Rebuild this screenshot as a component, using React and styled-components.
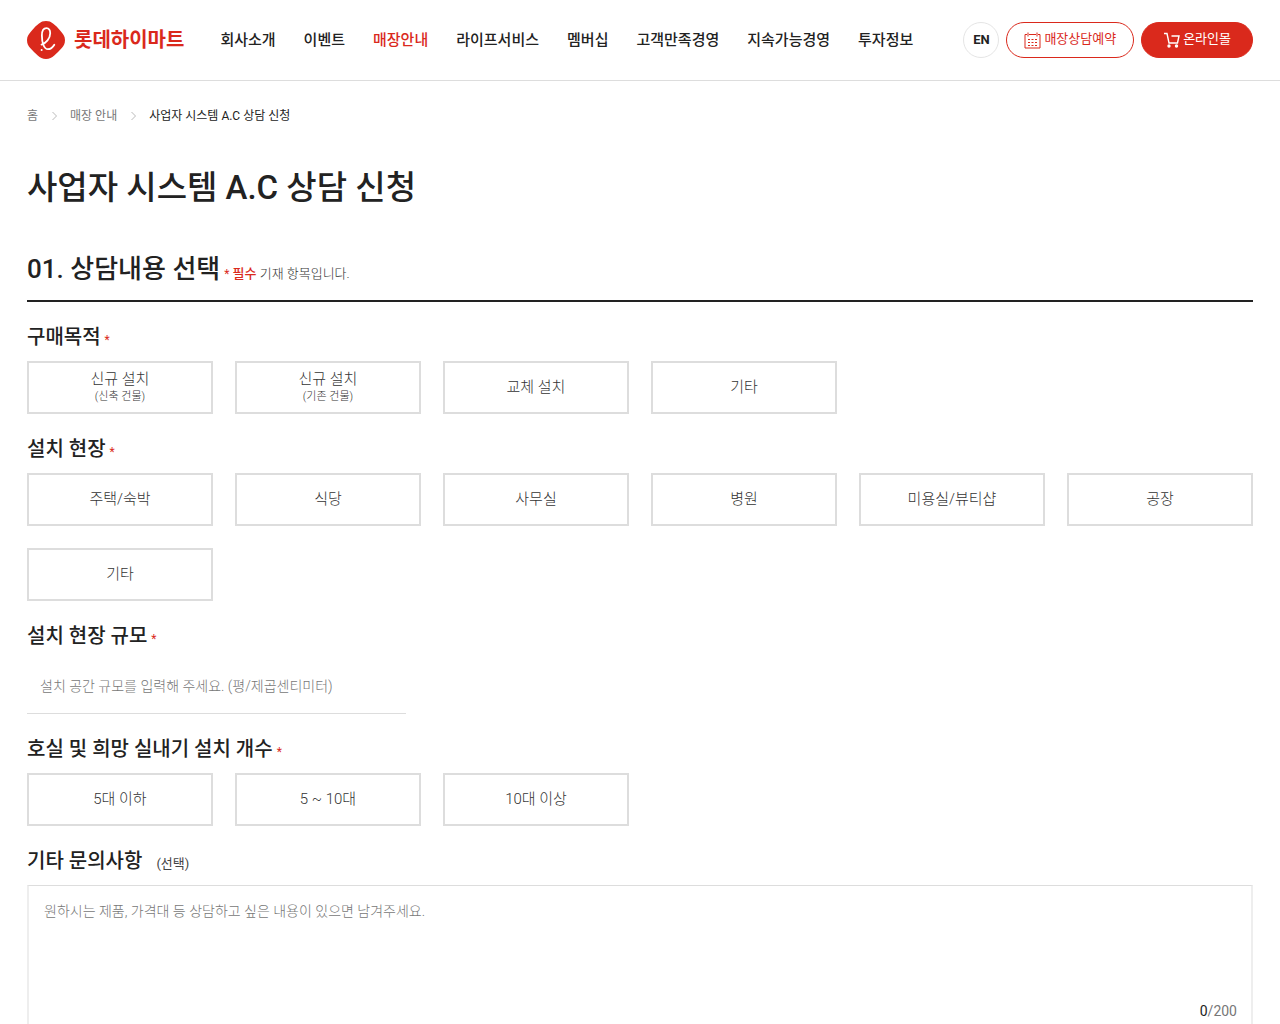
import React, { useState } from "react";
import styled, { createGlobalStyle } from "styled-components";

const GlobalStyle = createGlobalStyle`
  *, *::before, *::after { box-sizing: border-box; }
  body {
    margin: 0;
    background: #fff;
    color: #222;
    font-family: Roboto, "Noto Sans CJK KR", sans-serif;
    font-size: 14px;
  }
  h1, h2, h3, p, ul, ol { margin: 0; padding: 0; }
  ul, ol { list-style: none; }
  a { color: inherit; text-decoration: none; }
  button, input, textarea { font: inherit; color: inherit; }
`;

const Header = styled.header`
  display: flex;
  align-items: center;
  height: 81px;
  padding: 0 27px;
  border-bottom: 1px solid #ddd;
`;

const Logo = styled.a`
  display: flex;
  align-items: center;
  gap: 9px;
  color: #da291c;
  font-size: 20px;
  font-weight: 700;
  line-height: 30px;
  white-space: nowrap;
`;

const Nav = styled.nav`
  flex: 1;
  margin-left: 36px;
`;

const NavList = styled.ul`
  display: flex;
  gap: 28px;
`;

const NavLink = styled.a`
  color: ${(p) => (p.$active ? "#da291c" : "#222")};
  font-size: 15px;
  font-weight: 500;
  line-height: 24px;
  white-space: nowrap;
`;

const Tools = styled.div`
  display: flex;
  gap: 7px;
`;

const Language = styled.button`
  width: 36px;
  height: 36px;
  padding: 0 0 2px;
  border: 1px solid #e5e5e5;
  border-radius: 50%;
  background: #fff;
  font-size: 13px;
  font-weight: 700;
`;

const Pill = styled.a`
  display: flex;
  align-items: center;
  justify-content: center;
  gap: 3px;
  height: 36px;
  padding: 0 ${(p) => (p.$filled ? 21 : 17)}px;
  border: 1px solid #da291c;
  border-radius: 18px;
  background: ${(p) => (p.$filled ? "#da291c" : "#fff")};
  color: ${(p) => (p.$filled ? "#fff" : "#da291c")};
  font-size: 13px;
  line-height: 20px;
  white-space: nowrap;
`;

const PillText = styled.span`
  padding-bottom: 3px;
`;

const Main = styled.main`
  padding: 25px 27px 40px;
`;

const Crumbs = styled.ol`
  display: flex;
  align-items: center;
  gap: 12px;
  font-size: 12px;
  line-height: 20px;
`;

const Crumb = styled.li`
  display: flex;
  align-items: center;
  gap: 13px;
  color: ${(p) => (p.$current ? "#222" : "#777")};
`;

const Title = styled.h1`
  margin-top: 37px;
  font-size: 33px;
  font-weight: 500;
  line-height: 50px;
`;

const SectionHead = styled.div`
  display: flex;
  align-items: baseline;
  gap: 4px;
  margin-top: 36px;
  padding-bottom: 11px;
  border-bottom: 2px solid #222;
`;

const SectionTitle = styled.h2`
  font-size: 26px;
  font-weight: 500;
  line-height: 40px;
`;

const Note = styled.p`
  color: #333;
  font-size: 13px;
  font-weight: 300;
  line-height: 20px;

  strong { color: #da291c; font-weight: 500; }
`;

const Star = styled.span`
  color: #da291c;
  font-size: 12px;
  font-weight: 400;
  line-height: 1;
`;

const Field = styled.section`
  margin-top: 20px;
`;

const FieldTitle = styled.h3`
  display: flex;
  align-items: baseline;
  gap: ${(p) => (p.$wide ? 14 : 4)}px;
  height: 30px;
  margin-bottom: 9px;
  font-size: 20px;
  font-weight: 500;
  line-height: 30px;
`;

const Optional = styled.span`
  color: #444;
  font-size: 13px;
  font-weight: 400;
  line-height: 20px;
`;

const Options = styled.div`
  display: grid;
  grid-template-columns: repeat(6, 1fr);
  gap: 22px;
`;

const Option = styled.button`
  display: flex;
  flex-direction: column;
  align-items: center;
  justify-content: center;
  height: 53px;
  padding: 0 0 1px;
  border: 2px solid ${(p) => (p.$selected ? "#da291c" : "#ddd")};
  background: #fff;
  color: ${(p) => (p.$selected ? "#da291c" : "#333")};
  font-size: 15px;
  font-weight: 300;
  line-height: 20px;
  cursor: pointer;
`;

const OptionNote = styled.small`
  font-size: 11px;
  line-height: 16px;
`;

const SizeInput = styled.input`
  display: block;
  width: 379px;
  max-width: 100%;
  height: 54px;
  padding: 0 13px 2px;
  border: 0;
  border-bottom: 1px solid #ddd;
  background: #fff;
  font-size: 14px;
  font-weight: 300;
  &::placeholder { color: #777; opacity: 1; }
`;

const MessageBox = styled.div`
  padding: 13px 14px 16px 15px;
  border: 1px solid #ddd;
  border-right: 2px solid #eee;
  border-left: 2px solid #eee;
`;

const Message = styled.textarea`
  display: block;
  width: 100%;
  height: 92px;
  padding: 0;
  border: 0;
  outline: 0;
  resize: none;
  background: transparent;
  font-size: 14px;
  font-weight: 300;
  line-height: 24px;
  &::placeholder { color: #777; opacity: 1; }
`;

const Counter = styled.p`
  margin-top: 10px;
  color: #777;
  font-size: 14px;
  line-height: 20px;
  text-align: right;

  b { color: #222; font-weight: 400; }
`;

function LogoMark() {
  return (
    <svg width="38" height="38" viewBox="0 0 38 38" aria-hidden="true">
      <path
        d="M19 0c3 0 5 .8 7 2.500l3.600 3 3.300 3.800C36 12.700 38 15 38 19s-1.500 6-3.200 8l-3.800 4-4 3.800C25 36.600 22.500 38 19 38s-6-1.400-8-3.200L7 31l-3.800-4C1.500 25 0 23 0 19s2-6.300 5.100-9.700l3.300-3.800 3.600-3C14 .8 16 0 19 0z"
        fill="#da291c"
      />
      <path
        d="M14.500 23.600c4.500-1.300 8.700-6.100 8.700-11.300 0-3.100-1.300-5.100-3.700-5.100-2.900 0-4.600 3-4.600 7.300 0 7 2 13.700 6 13.700 3 0 4.800-1.800 6.400-4.500"
        fill="none"
        stroke="#fff"
        strokeWidth="1.800"
        strokeLinecap="round"
      />
      <circle cx="14.600" cy="29" r="1" fill="#fff" />
    </svg>
  );
}

function CalendarIcon() {
  return (
    <svg width="17" height="17" viewBox="0 0 17 17" fill="none" stroke="currentColor" aria-hidden="true">
      <path d="M1 2.500h2M5 2.500h7M14 2.500h2v13.500H1V2.500M4 .5v4M13 .5v4" />
      <path d="M4 7.500h2m1.500 0h2m1.500 0h2M4 10.500h2m1.500 0h2m1.500 0h2M4 13.500h2m1.500 0h2m1.500 0h2" />
    </svg>
  );
}

function CartIcon() {
  return (
    <svg width="17" height="16" viewBox="0 0 17 16" fill="none" stroke="currentColor" strokeWidth="1.400" aria-hidden="true">
      <path d="M1 1.500h3l2 9.500h8.500l1.500-7H8.500" />
      <circle cx="6" cy="14" r="1" fill="currentColor" />
      <circle cx="13.500" cy="14" r="1" fill="currentColor" />
    </svg>
  );
}

function Arrow() {
  return (
    <svg width="7" height="10" viewBox="0 0 7 10" fill="none" stroke="#bbb" aria-hidden="true">
      <path d="M1.500 1l4 4-4 4" />
    </svg>
  );
}

const menu = ["회사소개", "이벤트", "매장안내", "라이프서비스", "멤버십", "고객만족경영", "지속가능경영", "투자정보"];

const purposes = [
  { label: "신규 설치", note: "(신축 건물)" },
  { label: "신규 설치", note: "(기존 건물)" },
  { label: "교체 설치" },
  { label: "기타" },
];
const places = ["주택/숙박", "식당", "사무실", "병원", "미용실/뷰티샵", "공장", "기타"].map((label) => ({ label }));
const counts = ["5대 이하", "5 ~ 10대", "10대 이상"].map((label) => ({ label }));

function OptionField({ id, title, options }) {
  const [selected, setSelected] = useState(null);
  return (
    <Field>
      <FieldTitle id={id}>
        {title}
        <Star>*</Star>
      </FieldTitle>
      <Options role="group" aria-labelledby={id}>
        {options.map((option, i) => (
          <Option
            key={i}
            type="button"
            $selected={selected === i}
            aria-pressed={selected === i}
            onClick={() => setSelected(i)}
          >
            {option.label}
            {option.note && <OptionNote>{option.note}</OptionNote>}
          </Option>
        ))}
      </Options>
    </Field>
  );
}

export default function App() {
  const [message, setMessage] = useState("");
  return (
    <>
      <GlobalStyle />
      <Header>
        <Logo href="#">
          <LogoMark />
          롯데하이마트
        </Logo>
        <Nav>
          <NavList>
            {menu.map((item) => (
              <li key={item}>
                <NavLink href="#" $active={item === "매장안내"}>{item}</NavLink>
              </li>
            ))}
          </NavList>
        </Nav>
        <Tools>
          <Language type="button">EN</Language>
          <Pill href="#"><CalendarIcon /><PillText>매장상담예약</PillText></Pill>
          <Pill href="#" $filled><CartIcon /><PillText>온라인몰</PillText></Pill>
        </Tools>
      </Header>
      <Main>
        <Crumbs>
          <Crumb><a href="#">홈</a><Arrow /></Crumb>
          <Crumb><a href="#">매장 안내</a><Arrow /></Crumb>
          <Crumb $current aria-current="page">사업자 시스템 A.C 상담 신청</Crumb>
        </Crumbs>
        <Title>사업자 시스템 A.C 상담 신청</Title>
        <SectionHead>
          <SectionTitle>01. 상담내용 선택</SectionTitle>
          <Note><Star>*</Star> <strong>필수</strong> 기재 항목입니다.</Note>
        </SectionHead>
        <OptionField id="purpose" title="구매목적" options={purposes} />
        <OptionField id="place" title="설치 현장" options={places} />
        <Field>
          <FieldTitle>
            <label htmlFor="size">설치 현장 규모</label>
            <Star>*</Star>
          </FieldTitle>
          <SizeInput id="size" placeholder="설치 공간 규모를 입력해 주세요. (평/제곱센티미터)" />
        </Field>
        <OptionField id="count" title="호실 및 희망 실내기 설치 개수" options={counts} />
        <Field>
          <FieldTitle $wide>
            <label htmlFor="message">기타 문의사항</label>
            <Optional>(선택)</Optional>
          </FieldTitle>
          <MessageBox>
            <Message
              id="message"
              maxLength={200}
              value={message}
              onChange={(e) => setMessage(e.target.value)}
              placeholder="원하시는 제품, 가격대 등 상담하고 싶은 내용이 있으면 남겨주세요."
            />
            <Counter><b>{message.length}</b>/200</Counter>
          </MessageBox>
        </Field>
      </Main>
    </>
  );
}
